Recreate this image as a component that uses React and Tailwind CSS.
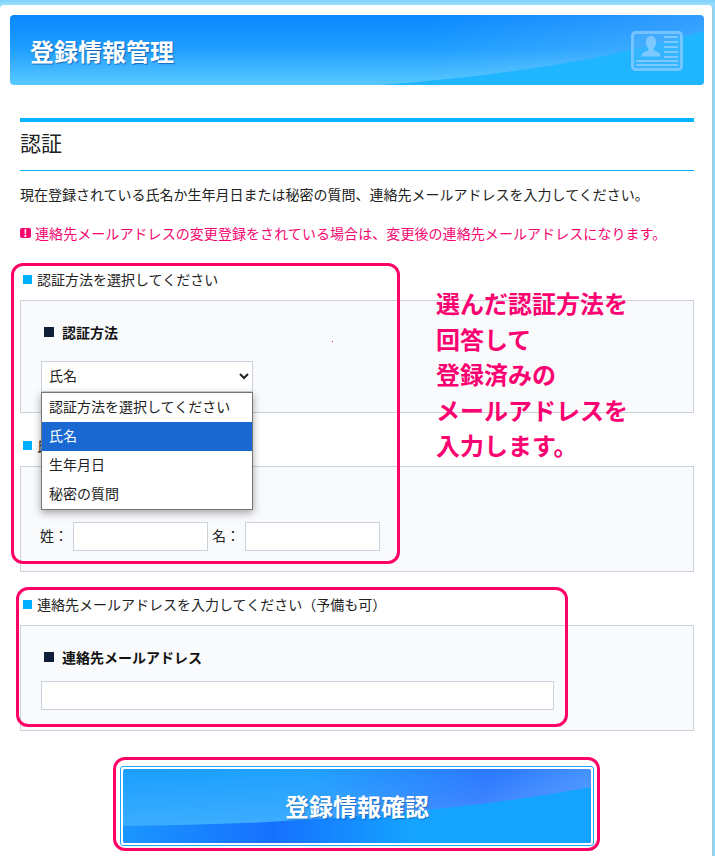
const font = "font-['Noto_Sans_CJK_JP','Liberation_Sans',sans-serif]";

function IdCard() {
  return (
    <svg width="52" height="40" viewBox="0 0 52 40" className="absolute left-[621px] top-[16px]" fill="#7cc8ff">
      <rect x="1.5" y="1.5" width="49" height="37" rx="3" fill="none" stroke="#7cc8ff" strokeWidth="3" opacity="0.9" />
      <rect x="3" y="3" width="46" height="34" fill="#58b8ff" opacity="0.35" />
      <path d="M14 4c3 0 5 2.500 5 6 0 3-1 5-2.500 6.500v1.500c2 2 7 1.500 7 6.500h-19c0-5 5-4.500 7-6.500v-1.500c-1.500-1.500-2.500-3.500-2.500-6.500 0-3.500 2-6 5-6z" transform="translate(6 1)" />
      <rect x="33" y="5" width="14" height="2" />
      <rect x="33" y="10" width="14" height="2" />
      <rect x="33" y="15" width="14" height="2" />
      <rect x="33" y="20" width="14" height="2" />
      <rect x="33" y="25" width="14" height="2" />
      <rect x="5" y="29" width="42" height="2" />
      <rect x="5" y="33" width="42" height="2" />
    </svg>
  );
}

function Header() {
  return (
    <div className="relative h-[70px] rounded-[4px] overflow-hidden bg-gradient-to-b from-[#0a88ff] via-[#1f9fff] to-[#58c9ff]">
      <svg width="694" height="70" viewBox="0 0 694 70" className="absolute left-0 top-0">
        <defs>
          <linearGradient id="shine" x1="0" x2="1" y1="0" y2="0">
            <stop offset="0.6" stopColor="#ffffff" stopOpacity="0" />
            <stop offset="1" stopColor="#ffffff" stopOpacity="0.16" />
          </linearGradient>
        </defs>
        <rect width="694" height="70" fill="url(#shine)" />
        <path d="M370 70C480 62 600 45 694 16V70Z" fill="#1fb5ff" />
      </svg>
      <IdCard />
      <div className="absolute left-[20px] top-[18px] text-[24px] leading-[36px] font-bold text-white [text-shadow:1px_1px_1px_rgba(0,60,140,0.6)]">
        登録情報管理
      </div>
    </div>
  );
}

function Label({ children, className }) {
  return (
    <div className={"flex items-center gap-[5px] pl-[3px] pb-[2px] text-[14px] leading-[18px] text-[#222] " + className}>
      <span className="w-[9px] h-[9px] bg-[#00b0ff]" />
      {children}
    </div>
  );
}

function SubHead({ children }) {
  return (
    <div className="flex items-center gap-[8px] pl-[3px] text-[14px] leading-[20px] font-bold text-[#111]">
      <span className="w-[10px] h-[10px] bg-[#0f1f3a]" />
      {children}
    </div>
  );
}

function Panel({ className, children }) {
  return (
    <div className={"border border-[#cbd2dc] bg-[#f9fafc] px-[20px] " + className}>{children}</div>
  );
}

function Dropdown() {
  return (
    <div className="absolute left-[41px] top-[392px] w-[212px] border border-[#767676] bg-white text-[14px] text-[#222] shadow-[0_3px_8px_rgba(0,0,0,0.35)]">
      <div className="h-[29px] pl-[7px] leading-[26px]">認証方法を選択してください</div>
      <div className="h-[29px] pl-[7px] leading-[26px] bg-[#1a69d2] text-white">氏名</div>
      <div className="h-[29px] pl-[7px] leading-[26px]">生年月日</div>
      <div className="h-[29px] pl-[7px] leading-[26px]">秘密の質問</div>
    </div>
  );
}

export default function App() {
  return (
    <div className={"relative w-[715px] h-[856px] overflow-hidden bg-[linear-gradient(#7fd0fa,#9be0ff_5px,#8fd8ff_5px)] pt-[5px] pr-[2px] " + font}>
      <div className="h-full rounded-t-[4px] bg-white pl-[10px] pr-[8px] pt-[10px] border-r border-[#a8c8d8]">
        <Header />

        <div className="px-[10px] mt-[33px]">
          <div className="h-[53px] border-t-[4px] border-b border-t-[#00b4ff] border-b-[#00b4ff] pt-[4px] text-[21px] leading-[32px] text-[#222]">
            認証
          </div>
          <p className="mt-[13px] text-[14px] leading-[20px] text-[#222] whitespace-nowrap">
            現在登録されている氏名か生年月日または秘密の質問、連絡先メールアドレスを入力してください。
          </p>
          <p className="mt-[19px] flex items-center gap-[4px] text-[14px] leading-[20px] tracking-[0.07px] text-[#f5056f] whitespace-nowrap">
            <span className="w-[11px] h-[10px] rounded-[2px] bg-[#f5056f] text-white text-[10px] leading-[10px] font-bold text-center">!</span>
            連絡先メールアドレスの変更登録をされている場合は、変更後の連絡先メールアドレスになります。
          </p>

          <Label className="mt-[27px]">認証方法を選択してください</Label>
          <Panel className="mt-[10px] h-[113px] pt-[21px]">
            <SubHead>認証方法</SubHead>
            <select
              defaultValue="氏名"
              className="mt-[19px] block w-[212px] h-[31px] border border-[#cbd2dc] bg-white pl-[3px] pb-[3px] text-[14px] text-[#222]"
            >
              <option>認証方法を選択してください</option>
              <option>氏名</option>
              <option>生年月日</option>
              <option>秘密の質問</option>
            </select>
          </Panel>

          <Label className="mt-[23px]">氏名を入力してください</Label>
          <Panel className="mt-[10px] h-[106px] pt-[55px]">
            <div className="flex items-center text-[14px] text-[#222]">
              <span className="w-[33px] -ml-px pb-[2px]">姓：</span>
              <input className="w-[135px] h-[29px] border border-[#cbd2dc] bg-white" />
              <span className="w-[37px] pl-[4px] pb-[2px]">名：</span>
              <input className="w-[135px] h-[29px] border border-[#cbd2dc] bg-white" />
            </div>
          </Panel>

          <Label className="mt-[23px]">連絡先メールアドレスを入力してください（予備も可）</Label>
          <Panel className="mt-[10px] h-[106px] pt-[21px]">
            <SubHead>連絡先メールアドレス</SubHead>
            <input className="mt-[14px] block w-[513px] h-[29px] border border-[#cbd2dc] bg-white" />
          </Panel>

          <div className="mt-[35px] mx-auto w-[474px] h-[80px] border border-[#1ea5ff] rounded-[3px] p-[2px]">
            <button className="relative w-full h-full rounded-[2px] overflow-hidden bg-[linear-gradient(112deg,#1a9fff_0%,#1fa0ff_38%,#2a78ff_74%,#4d99ff_100%)] text-white text-[24px] font-bold [text-shadow:1px_1px_1px_rgba(0,60,140,0.5)]">
              <svg width="468" height="74" viewBox="0 0 468 74" className="absolute left-0 top-0">
                <defs>
                  <linearGradient id="glow" x1="0" x2="0" y1="0" y2="1">
                    <stop offset="0" stopColor="#ffffff" stopOpacity="0" />
                    <stop offset="0.75" stopColor="#ffffff" stopOpacity="0.14" />
                  </linearGradient>
                  <linearGradient id="low" x1="0" x2="1" y1="0" y2="0">
                    <stop offset="0" stopColor="#1a96ff" />
                    <stop offset="0.32" stopColor="#1670ff" />
                    <stop offset="0.62" stopColor="#14a4ff" />
                    <stop offset="1" stopColor="#14a4ff" />
                  </linearGradient>
                </defs>
                <rect width="468" height="74" fill="url(#glow)" />
                <path d="M0 57C170 56 340 42 468 18V74H0Z" fill="url(#low)" />
              </svg>
              <span className="relative">登録情報確認</span>
            </button>
          </div>
        </div>
      </div>

      <Dropdown />

      <div className="absolute left-[11px] top-[263px] w-[389px] h-[301px] rounded-[12px] border-[3px] border-[#ff0066]" />
      <div className="absolute left-[16px] top-[587px] w-[552px] h-[140px] rounded-[12px] border-[3px] border-[#ff0066]" />
      <div className="absolute left-[113px] top-[757px] w-[487px] h-[94px] rounded-[12px] border-[3px] border-[#ff0066]" />
      <div className="absolute left-[332px] top-[341px] w-px h-px bg-[#ff0066]" />

      <div className="absolute left-[436px] top-[285px] text-[24px] leading-[35.500px] font-bold text-[#fb0070] whitespace-nowrap">
        選んだ認証方法を
        <br />
        回答して
        <br />
        登録済みの
        <br />
        メールアドレスを
        <br />
        入力します。
      </div>
    </div>
  );
}
